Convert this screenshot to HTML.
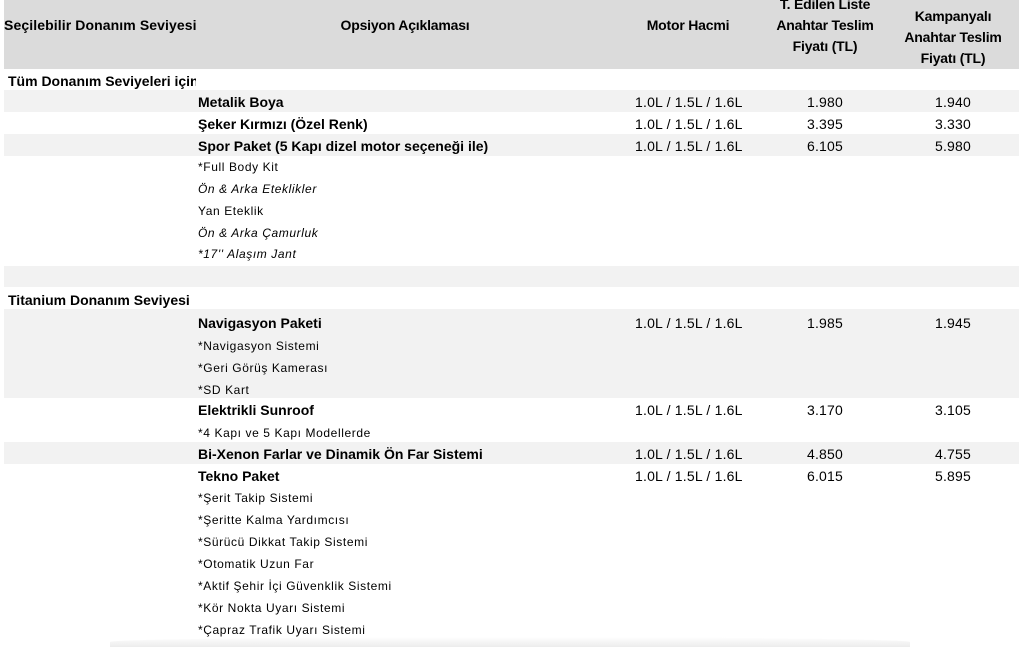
<!DOCTYPE html>
<html><head><meta charset="utf-8"><style>
body{margin:0;width:1019px;height:647px;background:#fff;position:relative;overflow:hidden;font-family:"Liberation Sans",sans-serif;color:#000}
.b{position:absolute;}
.t{position:absolute;white-space:nowrap;line-height:22px;font-size:14px;font-weight:bold;letter-spacing:0px}
.s{position:absolute;white-space:nowrap;line-height:22px;font-size:12px;letter-spacing:0.6px}
.i{font-style:italic}
.n{position:absolute;white-space:nowrap;line-height:22px;font-size:14px;letter-spacing:0.2px;text-align:center}
.h{position:absolute;white-space:nowrap;font-size:14px;font-weight:bold;letter-spacing:-0.2px;text-align:center;line-height:21px}
</style></head><body>
<div class="b" style="left:4px;top:0;width:1015px;height:69px;background:#dbdbdb"></div>
<div class="b" style="left:4px;top:90px;width:1015px;height:22px;background:#f2f2f2"></div>
<div class="b" style="left:4px;top:134px;width:1015px;height:22px;background:#f2f2f2"></div>
<div class="b" style="left:4px;top:266px;width:1015px;height:21px;background:#f2f2f2"></div>
<div class="b" style="left:4px;top:309px;width:1015px;height:89px;background:#f2f2f2"></div>
<div class="b" style="left:4px;top:442px;width:1015px;height:22px;background:#f2f2f2"></div>
<div class="b" style="left:110px;top:637px;width:800px;height:10px;background:linear-gradient(#fff,#ececec);border-radius:50% 50% 0 0"></div>

<div class="h" style="left:4px;top:15px;text-align:left;letter-spacing:0.1px">Seçilebilir Donanım Seviyesi</div>
<div class="h" style="left:300px;top:15px;width:210px">Opsiyon Açıklaması</div>
<div class="h" style="left:630px;top:15px;width:116px">Motor Hacmi</div>
<div class="h" style="left:760px;top:-6px;width:130px">T. Edilen Liste<br>Anahtar Teslim<br>Fiyatı (TL)</div>
<div class="h" style="left:888px;top:6px;width:130px">Kampanyalı<br>Anahtar Teslim<br>Fiyatı (TL)</div>

<div class="t" style="left:8px;top:70px;width:188px;overflow:hidden">Tüm Donanım Seviyeleri için</div>
<div class="t" style="left:198px;top:91px">Metalik Boya</div>
<div class="t" style="left:198px;top:113px">Şeker Kırmızı (Özel Renk)</div>
<div class="t" style="left:198px;top:135px">Spor Paket (5 Kapı dizel motor seçeneği ile)</div>
<div class="s" style="left:198px;top:156px">*Full Body Kit</div>
<div class="s i" style="left:198px;top:178px">Ön &amp; Arka Eteklikler</div>
<div class="s" style="left:198px;top:200px">Yan Eteklik</div>
<div class="s i" style="left:198px;top:222px">Ön &amp; Arka Çamurluk</div>
<div class="s i" style="left:198px;top:243px">*17'' Alaşım Jant</div>
<div class="t" style="left:8px;top:289px">Titanium Donanım Seviyesi</div>
<div class="t" style="left:198px;top:312px">Navigasyon Paketi</div>
<div class="s" style="left:198px;top:335px">*Navigasyon Sistemi</div>
<div class="s" style="left:198px;top:357px">*Geri Görüş Kamerası</div>
<div class="s" style="left:198px;top:379px">*SD Kart</div>
<div class="t" style="left:198px;top:399px">Elektrikli Sunroof</div>
<div class="s" style="left:198px;top:422px">*4 Kapı  ve 5 Kapı Modellerde</div>
<div class="t" style="left:198px;top:443px">Bi-Xenon Farlar ve Dinamik Ön Far Sistemi</div>
<div class="t" style="left:198px;top:465px">Tekno Paket</div>
<div class="s" style="left:198px;top:487px">*Şerit Takip Sistemi</div>
<div class="s" style="left:198px;top:509px">*Şeritte Kalma Yardımcısı</div>
<div class="s" style="left:198px;top:531px">*Sürücü Dikkat Takip Sistemi</div>
<div class="s" style="left:198px;top:553px">*Otomatik Uzun Far</div>
<div class="s" style="left:198px;top:575px">*Aktif Şehir İçi Güvenklik Sistemi</div>
<div class="s" style="left:198px;top:597px">*Kör Nokta Uyarı Sistemi</div>
<div class="s" style="left:198px;top:619px">*Çapraz Trafik Uyarı Sistemi</div>

<div class="n" style="left:635px;top:91px">1.0L  / 1.5L / 1.6L</div>
<div class="n" style="left:635px;top:113px">1.0L  / 1.5L / 1.6L</div>
<div class="n" style="left:635px;top:135px">1.0L  / 1.5L / 1.6L</div>
<div class="n" style="left:635px;top:312px">1.0L  / 1.5L / 1.6L</div>
<div class="n" style="left:635px;top:399px">1.0L  / 1.5L / 1.6L</div>
<div class="n" style="left:635px;top:443px">1.0L  / 1.5L / 1.6L</div>
<div class="n" style="left:635px;top:465px">1.0L  / 1.5L / 1.6L</div>

<div class="n" style="left:785px;width:80px;top:91px">1.980</div>
<div class="n" style="left:785px;width:80px;top:113px">3.395</div>
<div class="n" style="left:785px;width:80px;top:135px">6.105</div>
<div class="n" style="left:785px;width:80px;top:312px">1.985</div>
<div class="n" style="left:785px;width:80px;top:399px">3.170</div>
<div class="n" style="left:785px;width:80px;top:443px">4.850</div>
<div class="n" style="left:785px;width:80px;top:465px">6.015</div>

<div class="n" style="left:913px;width:80px;top:91px">1.940</div>
<div class="n" style="left:913px;width:80px;top:113px">3.330</div>
<div class="n" style="left:913px;width:80px;top:135px">5.980</div>
<div class="n" style="left:913px;width:80px;top:312px">1.945</div>
<div class="n" style="left:913px;width:80px;top:399px">3.105</div>
<div class="n" style="left:913px;width:80px;top:443px">4.755</div>
<div class="n" style="left:913px;width:80px;top:465px">5.895</div>
</body></html>
